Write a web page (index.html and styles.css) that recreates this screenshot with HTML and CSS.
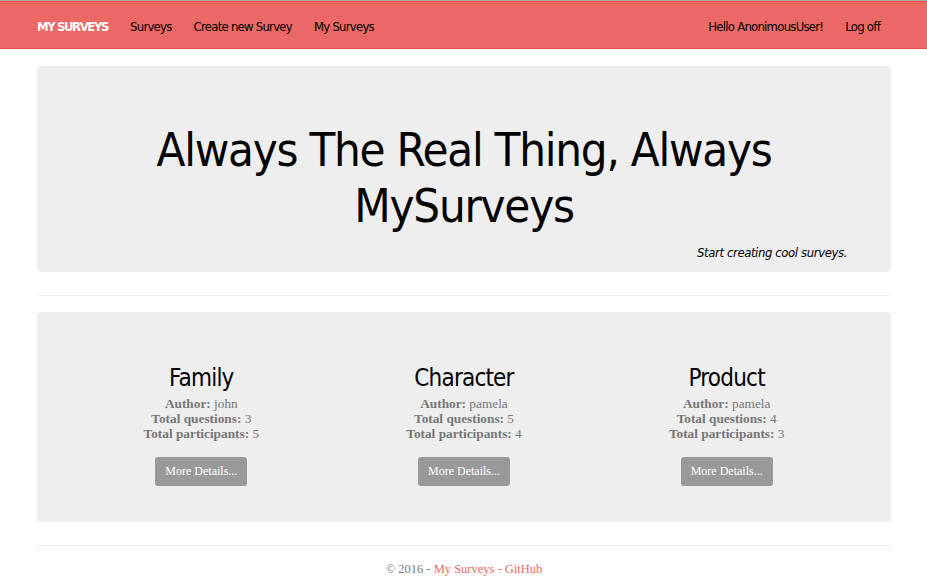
FILE: index.html
```html
<!DOCTYPE html>
<html>
<head>
<meta charset="utf-8">
<link rel="stylesheet" href="styles.css">
</head>
<body>
<nav class="navbar">
  <div class="nav-left">
    <a class="brand" href="#">My Surveys</a>
    <a class="nav-link" href="#">Surveys</a>
    <a class="nav-link" href="#">Create new Survey</a>
    <a class="nav-link" href="#">My Surveys</a>
  </div>
  <div class="nav-right">
    <a class="nav-link" href="#">Hello AnonimousUser!</a>
    <a class="nav-link" href="#">Log off</a>
  </div>
</nav>
<main class="container">
  <section class="jumbotron">
    <h1 class="hero-title">Always The Real Thing, Always MySurveys</h1>
    <p class="hero-sub">Start creating cool surveys.</p>
  </section>
  <hr class="rule">
  <section class="well">
    <div class="survey">
      <h2 class="survey-title">Family</h2>
      <div class="meta"><b>Author:</b> john</div>
      <div class="meta"><b>Total questions:</b> 3</div>
      <div class="meta"><b>Total participants:</b> 5</div>
      <a class="btn" href="#">More Details...</a>
    </div>
    <div class="survey">
      <h2 class="survey-title">Character</h2>
      <div class="meta"><b>Author:</b> pamela</div>
      <div class="meta"><b>Total questions:</b> 5</div>
      <div class="meta"><b>Total participants:</b> 4</div>
      <a class="btn" href="#">More Details...</a>
    </div>
    <div class="survey">
      <h2 class="survey-title">Product</h2>
      <div class="meta"><b>Author:</b> pamela</div>
      <div class="meta"><b>Total questions:</b> 4</div>
      <div class="meta"><b>Total participants:</b> 3</div>
      <a class="btn" href="#">More Details...</a>
    </div>
  </section>
  <hr class="rule rule-foot">
  <footer class="footer">© 2016 - <a href="#">My Surveys - GitHub</a></footer>
</main>
</body>
</html>
```
FILE: styles.css
```css
* { box-sizing: border-box; }
html, body { margin: 0; padding: 0; background: #fff; }
body {
  font-family: "Liberation Serif", Georgia, serif;
  color: #777;
  font-size: 13px;
}
a { text-decoration: none; }

.navbar {
  height: 49px;
  background: #eb6864;
  border-top: 1px solid #aaaaaa;
  border-bottom: 1px solid #e84a45;
  box-shadow: inset 0 1px 0 #e84a45;
  display: flex;
  justify-content: space-between;
  align-items: center;
  padding: 3px 47px 0 37px;
  font-family: "DejaVu Sans Condensed", "Liberation Sans", sans-serif;
  font-size: 13px;
  letter-spacing: -0.75px;
}
.nav-left, .nav-right { display: flex; align-items: center; gap: 22px; }
.brand {
  color: #fff;
  font-weight: bold;
  text-transform: uppercase;
  letter-spacing: -1.4px;
}
.nav-link { color: #000; }

.container { padding: 17px 36px 0 37px; }

.jumbotron {
  background: #eeeeee;
  border-radius: 5px;
  height: 206px;
  padding: 56px 44px 0 44px;
}
.hero-title {
  margin: 0;
  text-align: center;
  font-family: "DejaVu Sans Condensed", "Liberation Sans", sans-serif;
  font-weight: normal;
  color: #000;
  font-size: 47px;
  line-height: 56px;
  letter-spacing: -1.25px;
  padding: 0 60px;
}
.hero-sub {
  margin: 11px 0 0;
  text-align: right;
  font-family: "DejaVu Sans Condensed", "Liberation Sans", sans-serif;
  font-style: italic;
  font-size: 13px;
  letter-spacing: -0.4px;
  color: #000;
}

.rule {
  border: 0;
  border-top: 1px solid #eeeeee;
  margin: 23px 0 16px;
}

.well {
  background: #eeeeee;
  border-radius: 4px;
  height: 210px;
  padding: 51px 33px 0 33px;
  display: grid;
  grid-template-columns: repeat(3, 1fr);
}
.survey {
  display: flex;
  flex-direction: column;
  align-items: center;
  text-align: center;
}
.survey-title {
  margin: 0 0 3px;
  font-family: "DejaVu Sans Condensed", "Liberation Sans", sans-serif;
  font-weight: normal;
  font-size: 24px;
  line-height: 30px;
  letter-spacing: -0.8px;
  color: #000;
}
.meta { line-height: 15px; font-size: 13.3px; color: #777; }
.meta b { color: #777; }
.btn {
  margin-top: 16px;
  display: inline-block;
  width: 92px;
  height: 29px;
  line-height: 29px;
  text-align: center;
  background: #999999;
  color: #fff;
  border-radius: 3px;
  font-size: 12px;
}

.rule-foot { margin: 23px 0 16px; }
.footer {
  text-align: center;
  font-size: 12.5px;
  color: #777;
}
.footer a { color: #eb6864; }
```
